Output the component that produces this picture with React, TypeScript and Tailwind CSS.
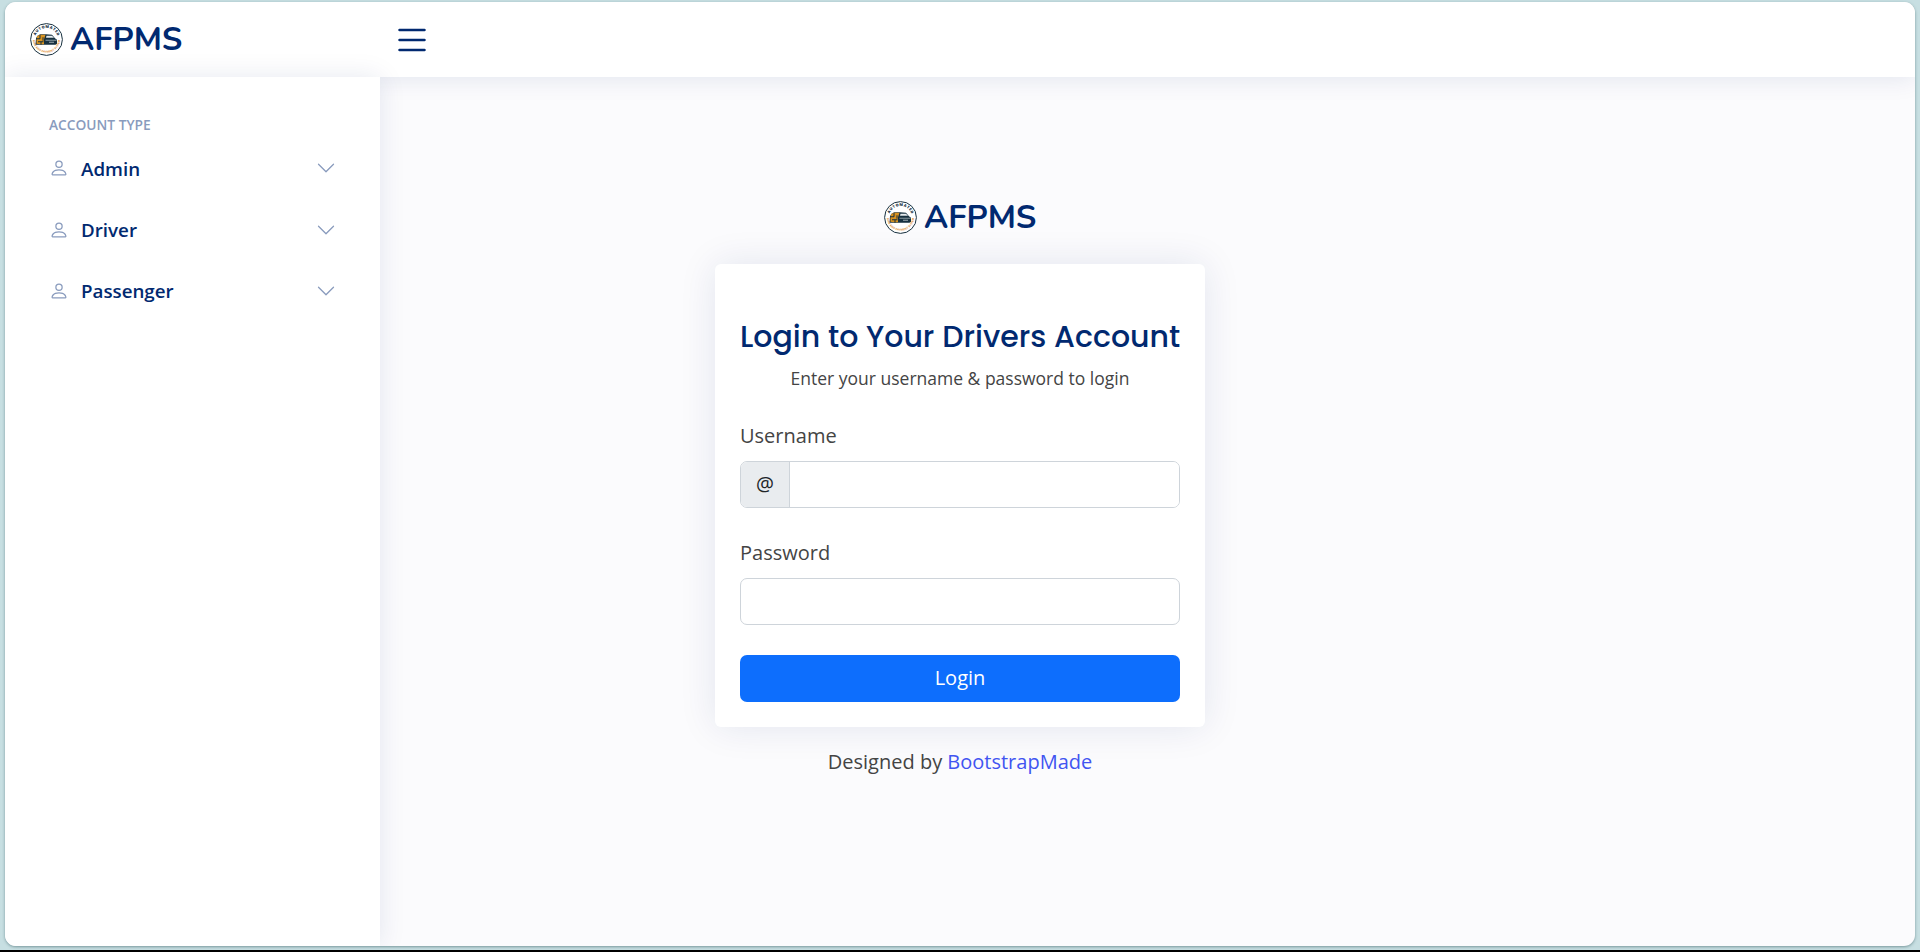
import React from "react";
import { BsChevronDown, BsList, BsPerson } from "react-icons/bs";

function Emblem({ id }: { id: string }) {
  return (
    <svg viewBox="0 0 66 66" className="size-[33px] shrink-0">
      <defs>
        <path id={`${id}-top`} d="M10 33a23 23 0 0 1 46 0" />
        <path id={`${id}-bottom`} d="M5.500 32a27.500 27.500 0 0 0 55 0" />
      </defs>
      <circle cx="33" cy="33" r="31.800" fill="#fff" stroke="#17303f" strokeWidth="2" />
      <text fill="#17303f" fontSize="7.500" fontWeight="800" letterSpacing="1" fontFamily="Open Sans, sans-serif">
        <textPath href={`#${id}-top`} startOffset="51%" textAnchor="middle">AUTOMATED</textPath>
      </text>
      <text fill="#e08a2b" fontSize="5.500" fontWeight="700" letterSpacing="0.200" fontFamily="Open Sans, sans-serif">
        <textPath href={`#${id}-bottom`} startOffset="50%" textAnchor="middle">FARE AND PAYMENT SYSTEM</textPath>
      </text>
      <g transform="translate(0 1.500)">
        <path d="M12 29l3-5 6-3h11l12 1 6 7 4 3v8l-3 2H11z" fill="#17303f" />
        <path d="M14 25l5-3h12l-3 9v10h-8l-7-1v-9z" fill="#d8921f" />
        <path d="M20 22v8h-8M26 27v7M16 36h11M22 36v6" stroke="#17303f" strokeWidth="2" fill="none" />
        <path d="M33 24h11l4 4H32z" fill="#e6ebee" />
        <path d="M31 33h22" stroke="#8b9aa3" strokeWidth="2" />
        <path d="M38 37h10" stroke="#c9d2d7" strokeWidth="1.500" />
      </g>
    </svg>
  );
}

function Brand({ id }: { id: string }) {
  return (
    <a href="#" className="flex items-center text-[#012970]">
      <Emblem id={id} />
      <span className="ml-[7px] w-[112px] whitespace-nowrap font-['Nunito','Lato',sans-serif] text-[32.5px] leading-10 font-bold">
        AFPMS
      </span>
    </a>
  );
}

const accounts = ["Admin", "Driver", "Passenger"];

export default function App() {
  return (
    <div className="h-[952px] w-[1920px] overflow-hidden border-b-2 border-black bg-[#c7dfe2] px-[5px] pt-[2px] pb-1 font-['Open_Sans',sans-serif] text-xl text-[#444444]">
      <div className="flex h-[944px] flex-col overflow-hidden rounded-[11px] bg-[#fbfbfd] shadow-[0_1px_3px_rgba(40,80,85,0.5)]">
        <header className="relative z-10 flex h-[75px] shrink-0 items-center bg-white pl-[25px] shadow-[0_2px_25px_rgba(1,41,112,0.1)]">
          <div className="pb-px">
            <Brand id="header" />
          </div>
          <BsList className="ml-[210px] size-10 text-[#012970]" />
        </header>
        <div className="flex min-h-0 flex-1">
          <aside className="relative z-20 w-[375px] shrink-0 bg-white px-11 pt-[38px] shadow-[0_0_25px_rgba(1,41,112,0.1)]">
            <h2 className="text-[13.75px] leading-5 font-semibold text-[#899bbd]">ACCOUNT TYPE</h2>
            <nav className="mt-1 flex flex-col">
              {accounts.map((name) => (
                <a key={name} href="#" className="flex h-[61.25px] items-center pb-[2.5px] text-[18.75px] font-semibold text-[#012970]">
                  <BsPerson className="mr-3 size-5 text-[#899bbd]" />
                  <span className="pt-[0.5px]">{name}</span>
                  <BsChevronDown className="mr-0 ml-auto size-5 text-[#899bbd]" />
                </a>
              ))}
            </nav>
          </aside>
          <main className="flex flex-1 flex-col items-center pt-[120px] pr-[375px]">
            <Brand id="login" />
            <section className="mt-[27px] w-[490px] rounded-md bg-white px-[25px] pt-[50px] pb-[25px] shadow-[0_0_37px_rgba(1,41,112,0.1)]">
              <h1 className="text-center font-['Poppins','Inter',sans-serif] text-[30px] leading-[45px] font-medium whitespace-nowrap text-[#012970]">
                Login to Your Drivers Account
              </h1>
              <p className="mt-1.5 text-center text-[17.5px] leading-[26px]">Enter your username &amp; password to login</p>
              <form className="mt-[30px]">
                <label htmlFor="username" className="block leading-[30px]">Username</label>
                <div className="mt-2.5 flex h-[47px] overflow-hidden rounded-[7px] border border-[#ced4da]">
                  <span className="flex w-[49px] items-center justify-center border-r border-[#ced4da] bg-[#e9ecef] pb-0.5 text-[#212529]">@</span>
                  <input id="username" type="text" className="min-w-0 flex-1 bg-white px-4 outline-none" />
                </div>
                <label htmlFor="password" className="mt-[30px] block leading-[30px]">Password</label>
                <input id="password" type="password" className="mt-2.5 block h-[47px] w-full rounded-[7px] border border-[#ced4da] bg-white px-4 outline-none" />
                <button type="button" className="mt-[30px] block h-[47px] w-full rounded-[7px] bg-[#0d6efd] pb-0.5 text-white">Login</button>
              </form>
            </section>
            <p className="mt-5 leading-[30px]">
              Designed by <a href="#" className="text-[#4154f1]">BootstrapMade</a>
            </p>
          </main>
        </div>
      </div>
    </div>
  );
}
